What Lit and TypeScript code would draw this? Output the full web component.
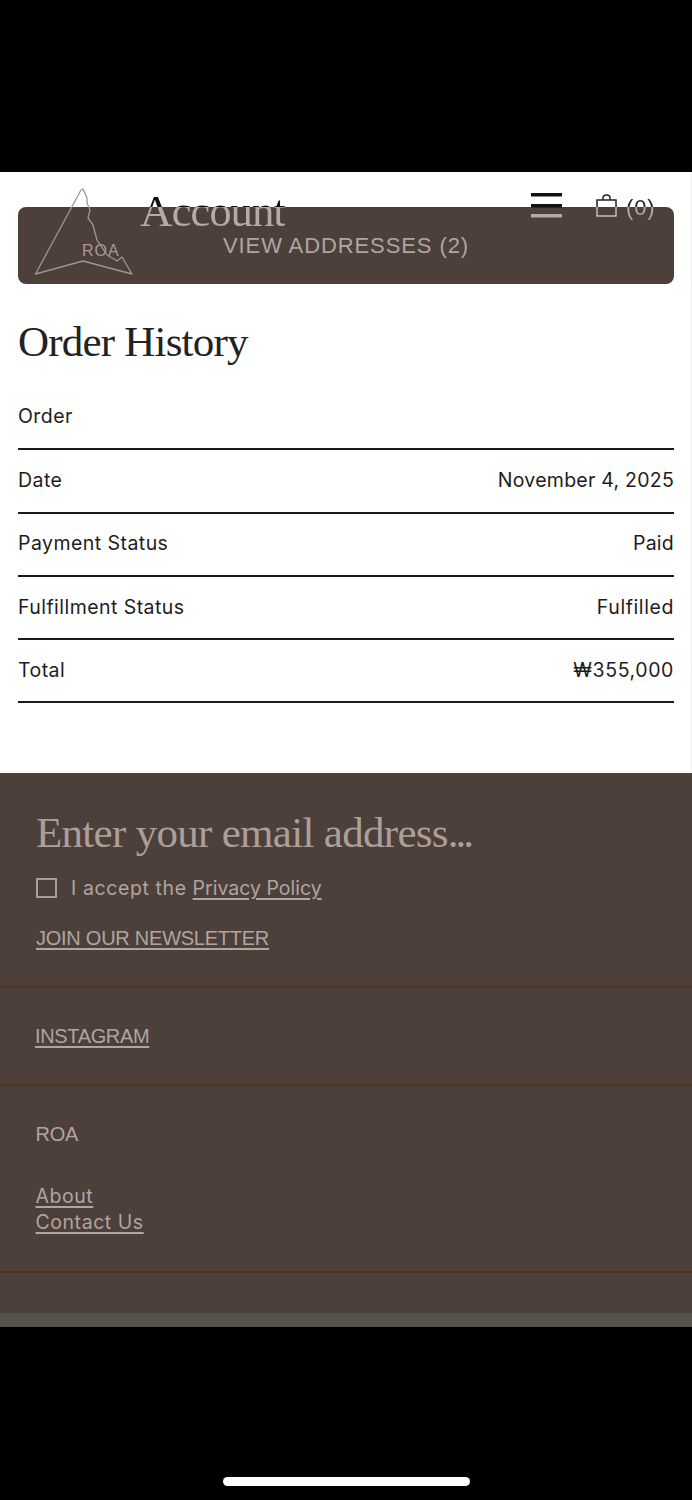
import { LitElement, html, css } from "lit";
import { customElement } from "lit/decorators.js";

@customElement("app-root")
export class AppRoot extends LitElement {
  static styles = css`
    :host { display: block; width: 692px; height: 1500px; background: #000; font-family: "Liberation Sans", Arial, sans-serif; overflow: hidden; }
    * { box-sizing: border-box; }
    .spacer-top { height: 172px; background: #000; }
    .page { position: relative; height: 601px; background: #fff; padding: 35px 18px 0; display: flex; flex-direction: column; }
    .scrollbar { position: absolute; right: 0; top: 0; bottom: 0; width: 1px; background: #f0f0f0; }
    .addresses { height: 77px; flex: none; background: #4d3f3a; border-radius: 8px; display: flex; align-items: center; justify-content: center; color: #b0a5a0; font-size: 22px; letter-spacing: 0.9px; padding-top: 1px; }
    h1 { margin: 33px 0 0; height: 50px; font: 400 43px/50px "Liberation Serif", serif; letter-spacing: -0.8px; color: #222; }
    .table { margin-top: 20px; }
    .row { height: 63.3px; padding-bottom: 2px; display: flex; align-items: center; justify-content: space-between; border-bottom: 2px solid #1a1a1a; font: 400 19.5px Inter, sans-serif; color: #1d1d1d; }
    .row.first { padding-bottom: 4px; }
    .row .k { letter-spacing: 0.45px; }
    .row .v { letter-spacing: 0.25px; }
    .row .wide { letter-spacing: 0.6px; }
    .header { position: absolute; left: 0; right: 0; top: 0; height: 110px; }
    .logo { position: absolute; left: 34px; top: 15px; width: 100px; height: 90px; }
    .logo-text { position: absolute; left: 82px; top: 70px; font-size: 16px; color: #a59a95; letter-spacing: 1px; }
    .title { position: absolute; left: 140px; top: 14px; font: 400 45px/50px "Liberation Serif", serif; letter-spacing: -1.1px; color: transparent; background: linear-gradient(#111 0, #111 21px, #b5aaa5 21px); -webkit-background-clip: text; background-clip: text; }
    .burger { position: absolute; left: 531px; top: 21px; }
    .bag { position: absolute; left: 596px; top: 22px; }
    .count { position: absolute; left: 626px; top: 23px; font-size: 22px; line-height: 26px; letter-spacing: 0.8px; color: transparent; background: linear-gradient(#222 0, #222 12px, #b5aaa5 12px); -webkit-background-clip: text; background-clip: text; }
    footer { height: 554px; background: #4d3f3a; color: #b0a5a0; display: flex; flex-direction: column; }
    a { color: inherit; text-decoration: underline; text-underline-offset: 3px; text-decoration-thickness: 1.5px; }
    .news { height: 215px; padding: 34px 36px 0; border-bottom: 2px solid #4a3822; }
    .email { font: 400 43px/52px "Liberation Serif", serif; letter-spacing: -0.7px; color: #ab9f9a; }
    .dots { letter-spacing: -3px; }
    .accept { display: flex; align-items: center; margin-top: 17px; font: 400 19.5px/24px Inter, sans-serif; letter-spacing: 0.6px; }
    .box { width: 21px; height: 20px; border: 2px solid #ab9f9a; margin-right: 14px; flex: none; }
    .accept a { margin-left: 6px; letter-spacing: 0; }
    .join { display: block; margin-top: 25px; font-size: 20px; letter-spacing: -0.25px; line-height: 26px; }
    .insta { height: 98px; padding: 35px 35px 0; border-bottom: 2px solid #4a3822; font-size: 20px; line-height: 26px; letter-spacing: -0.35px; }
    .links { height: 187px; padding: 35px 36px 0 35.5px; border-bottom: 2px solid #4a3822; font: 400 19.5px/26px Inter, sans-serif; letter-spacing: 0.55px; }
    .links .name { margin-bottom: 36px; font: 400 20px/26px "Liberation Sans", sans-serif; letter-spacing: -0.25px; }
    .links a { display: block; }
    .strip { height: 14px; margin-top: auto; background: #55524c; }
    .bottom { height: 173px; display: flex; justify-content: center; padding-top: 150px; background: #000; }
    .home { width: 247px; height: 9px; border-radius: 5px; background: #fff; }
  `;

  render() {
    const rows = [["Date", "November 4, 2025", ""], ["Payment Status", "Paid", ""], ["Fulfillment Status", "Fulfilled", "wide"], ["Total", "₩355,000", "wide"]];
    return html`
      <div class="spacer-top"></div>
      <main class="page">
        <div class="addresses">VIEW ADDRESSES (2)</div>
        <h1>Order History</h1>
        <div class="table">
          <div class="row first"><span class="k">Order</span></div>
          ${rows.map(([k, v, w]) => html`<div class="row"><span class="k">${k}</span><span class="v ${w}">${v}</span></div>`)}
        </div>
        <div class="header">
          <svg class="logo" viewBox="34 187 100 90" fill="none" stroke="#a0958f" stroke-width="1.3" stroke-linejoin="round">
            <path d="M35.5 274 L81 190 L83 189 L87 198 L87 203 L90 210 L88 218 L93 225 L97 240 L107 255 L117 261 L122 257 L132 274 L83 261 Z" />
          </svg>
          <span class="logo-text">ROA</span>
          <span class="title">Account</span>
          <svg class="burger" width="32" height="26" viewBox="0 0 32 26">
            <rect x="0" y="0" width="31" height="3.5" fill="#111" />
            <rect x="0" y="11" width="31" height="3.5" fill="#111" />
            <rect x="0" y="21" width="31" height="3.5" fill="#b5aaa5" />
          </svg>
          <svg class="bag" width="22" height="24" viewBox="0 0 22 24" fill="none" stroke-width="1.5">
            <path d="M1 13 V6 H20 V13" stroke="#222" />
            <path d="M1 13 V22 H20 V13" stroke="#c5bcb8" />
            <path d="M7 6 V4 Q7 1 10.5 1 Q14 1 14 4 V6" stroke="#222" />
          </svg>
          <span class="count">(0)</span>
        </div>
        <div class="scrollbar"></div>
      </main>
      <footer>
        <div class="news">
          <div class="email">Enter your email address<span class="dots">...</span></div>
          <label class="accept"><span class="box"></span>I accept the <a>Privacy Policy</a></label>
          <a class="join">JOIN OUR NEWSLETTER</a>
        </div>
        <div class="insta"><a>INSTAGRAM</a></div>
        <div class="links">
          <div class="name">ROA</div>
          <a>About</a>
          <a>Contact Us</a>
        </div>
        <div class="strip"></div>
      </footer>
      <div class="bottom"><div class="home"></div></div>
    `;
  }
}
